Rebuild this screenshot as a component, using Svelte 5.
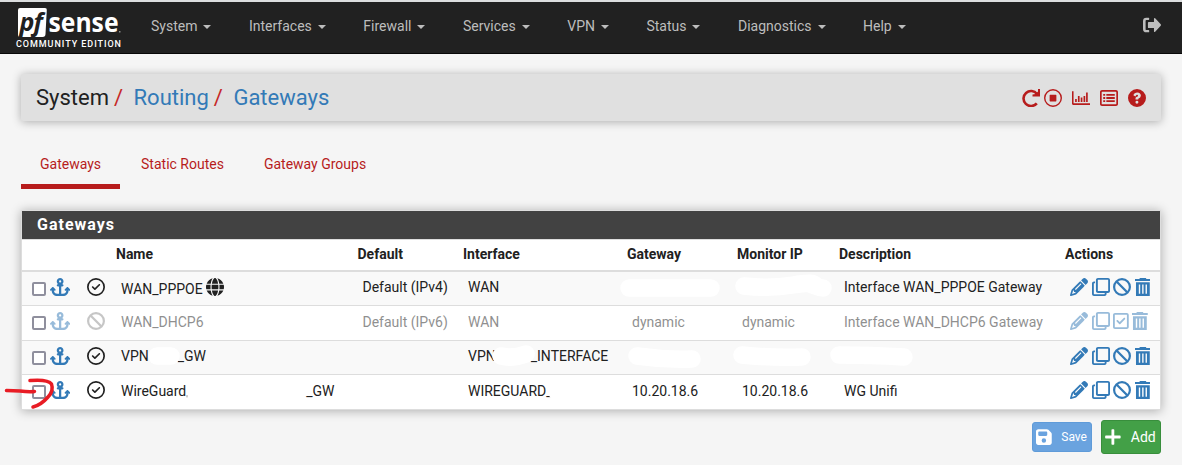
<script>
    const menus = ['System', 'Interfaces', 'Firewall', 'Services', 'VPN', 'Status', 'Diagnostics', 'Help'];
    const tabs = ['Gateways', 'Static Routes', 'Gateway Groups'];
    const rows = [
        { name: 'WAN_PPPOE', def: 'Default (IPv4)', iface: 'WAN', gw: '', mon: '', desc: 'Interface WAN_PPPOE Gateway', globe: true },
        { name: 'WAN_DHCP6', def: 'Default (IPv6)', iface: 'WAN', gw: 'dynamic', mon: 'dynamic', desc: 'Interface WAN_DHCP6 Gateway', disabled: true },
        { name: 'VPN', nameEnd: '_GW', gap: 29, def: '', iface: 'VPN', ifaceEnd: '_INTERFACE', gw: '', mon: '', desc: '' },
        { name: 'WireGuard', nameEnd: '_GW', gap: 120, def: '', iface: 'WIREGUARD_', gw: '10.20.18.6', mon: '10.20.18.6', desc: 'WG Unifi' }
    ];

    const icons = {
        anchor: [576, 'M320 96a32 32 0 1 1 -64 0 32 32 0 1 1 64 0zm21.1 80C367 158.8 384 129.4 384 96c0-53-43-96-96-96s-96 43-96 96c0 33.4 17 62.8 42.9 80H224c-17.7 0-32 14.3-32 32s14.3 32 32 32h32V448H208c-53 0-96-43-96-96v-6.1l7 7c9.4 9.4 24.6 9.4 33.9 0s9.4-24.6 0-33.9L97 263c-9.4-9.4-24.6-9.4-33.9 0L7 319c-9.4 9.4-9.4 24.6 0 33.9s24.6 9.4 33.9 0l7-7V352c0 88.4 71.6 160 160 160h160c88.4 0 160-71.6 160-160v-6.1l7 7c9.4 9.4 24.6 9.4 33.9 0s9.4-24.6 0-33.9l-56-56c-9.4-9.4-24.6-9.4-33.9 0l-56 56c-9.4 9.4-9.4 24.6 0 33.9s24.6 9.4 33.9 0l7-7V352c0 53-43 96-96 96H320V240h32c17.7 0 32-14.3 32-32s-14.3-32-32-32H341.1z'],
        check: [512, 'M256 48a208 208 0 1 1 0 416 208 208 0 1 1 0-416zm0 464A256 256 0 1 0 256 0a256 256 0 1 0 0 512zM369 209c9.4-9.4 9.4-24.6 0-33.9s-24.6-9.4-33.9 0l-111 111-47-47c-9.4-9.4-24.6-9.4-33.9 0s-9.4 24.6 0 33.9l64 64c9.4 9.4 24.6 9.4 33.9 0L369 209z'],
        ban: [512, 'M367.2 412.5L99.5 144.8C77.1 176.1 64 214.5 64 256c0 106 86 192 192 192c41.5 0 79.9-13.1 111.2-35.5zm45.3-45.3C434.9 335.9 448 297.5 448 256c0-106-86-192-192-192c-41.5 0-79.9 13.1-111.2 35.5L412.5 367.2zM0 256a256 256 0 1 1 512 0A256 256 0 1 1 0 256z'],
        globe: [512, 'M352 256c0 22.2-1.2 43.6-3.3 64H163.3c-2.2-20.4-3.3-41.8-3.3-64s1.2-43.6 3.3-64H348.7c2.2 20.4 3.3 41.8 3.3 64zm28.8-64H503.9c5.3 20.5 8.1 41.9 8.1 64s-2.8 43.5-8.1 64H380.8c2.1-20.6 3.2-42 3.2-64s-1.1-43.4-3.2-64zm112.6-32H376.7c-10-63.9-29.8-117.4-55.3-151.6c78.3 20.7 142 77.5 171.9 151.6zm-149.1 0H167.7c6.1-36.4 15.5-68.6 27-94.7c10.5-23.6 22.2-40.7 33.5-51.5C239.4 3.2 248.7 0 256 0s16.6 3.2 27.8 13.8c11.3 10.8 23 27.9 33.5 51.5c11.6 26 20.9 58.2 27 94.7zm-209 0H18.6C48.6 85.9 112.2 29.1 190.6 8.4C165.1 42.6 145.3 96.1 135.3 160zM8.1 192H131.2c-2.1 20.6-3.2 42-3.2 64s1.1 43.4 3.2 64H8.1C2.8 299.5 0 278.1 0 256s2.8-43.5 8.1-64zM194.7 446.6c-11.6-26-20.9-58.2-27-94.6H344.3c-6.1 36.4-15.5 68.6-27 94.6c-10.5 23.6-22.2 40.7-33.5 51.5C272.6 508.8 263.3 512 256 512s-16.6-3.2-27.8-13.8c-11.3-10.8-23-27.9-33.5-51.5zM135.3 352c10 63.9 29.8 117.4 55.3 151.6C112.2 482.9 48.6 426.1 18.6 352H135.3zm358.1 0c-30 74.1-93.6 130.9-171.9 151.6c25.5-34.2 45.2-87.7 55.3-151.6H493.4z'],
        pencil: [512, 'M410.3 231l11.3-11.3-33.9-33.9-62.1-62.1L291.7 89.8l-11.3 11.3-22.6 22.6L58.6 322.9c-10.4 10.4-18 23.3-22.2 37.4L1 480.7c-2.5 8.4-.2 17.5 6.1 23.7s15.3 8.5 23.7 6.1l120.3-35.4c14.1-4.2 27-11.8 37.4-22.2L387.7 253.7 410.3 231zM160 399.4l-9.1 22.7c-4 3.1-8.5 5.4-13.3 6.9L59.4 452l23-78.1c1.4-4.9 3.8-9.4 6.9-13.3l22.7-9.1v32c0 8.8 7.2 16 16 16h32zM362.7 18.7L348.3 33.2 325.7 55.8 314.3 67.1l33.9 33.9 62.1 62.1 33.9 33.9 11.3-11.3 22.6-22.6 14.5-14.5c25-25 25-65.5 0-90.5L453.3 18.7c-25-25-65.5-25-90.5 0zm-47.4 168l-144 144c-6.2 6.2-16.4 6.2-22.6 0s-6.2-16.4 0-22.6l144-144c6.2-6.2 16.4-6.2 22.6 0s6.2 16.4 0 22.6z'],
        clone: [512, 'M64 460H352c6 0 10-4 10-10V425h52v30c0 31-26 57-57 57H57c-31 0-57-26-57-57V155c0-31 26-57 57-57h30v52H64c-7 0-12 5-12 12V448c0 7 5 12 12 12zM178 372H448c7 0 12-5 12-12V64c0-7-5-12-12-12H178c-7 0-12 5-12 12V360c0 7 5 12 12 12zM112 368V57c0-31 26-57 57-57H455c31 0 57 26 57 57V368c0 31-26 57-57 57H169c-31 0-57-26-57-57z'],
        square: [448, 'M64 76c-7 0-12 5-12 12V424c0 7 5 12 12 12H384c7 0 12-5 12-12V88c0-7-5-12-12-12H64zM0 82C0 51 26 25 57 25H391c31 0 57 26 57 57V430c0 31-26 57-57 57H57c-31 0-57-26-57-57V82zM341 209L209 341c-10 10-26 10-36 0l-68-68c-10-10-10-26 0-36s26-10 36 0l50 50L305 173c10-10 26-10 36 0s10 26 0 36z'],
        trash: [448, 'M140 0H308L326 28H448V84H0V28H122zM28 120H420V512H28zM108 184V448H148V184zM204 184V448H244V184zM300 184V448H340V184z'],
        stop: [512, 'M256 40a216 216 0 1 1 0 432 216 216 0 1 1 0-432zm0 472A256 256 0 1 0 256 0a256 256 0 1 0 0 512zM176 160h160q16 0 16 16v160q0 16-16 16H176q-16 0-16-16V176q0-16 16-16z'],
        chart: [512, 'M0 64h44v340h468v48H32Q0 452 0 420zM88 282h48v86H88zM168 200h48v168h-48zM248 240h48v128h-48zM328 200h48v168h-48zM400 96h48v272h-48z'],
        list: [512, 'M64 80c-8.8 0-16 7.2-16 16V416c0 8.8 7.2 16 16 16H448c8.8 0 16-7.2 16-16V96c0-8.8-7.2-16-16-16H64zM0 82C0 51 26 25 57 25H455c31 0 57 26 57 57V430c0 31-26 57-57 57H57c-31 0-57-26-57-57V82zM92 140h56v52H92zM92 230h56v52H92zM92 320h56v52H92zM180 140h240v52H180zM180 230h240v52H180zM180 320h240v52H180z'],
        help: [512, 'M256 512A256 256 0 1 0 256 0a256 256 0 1 0 0 512zM152 178Q182 96 264 96Q366 102 366 190Q362 248 292 278V302H214V270Q214 242 240 230Q288 212 286 190Q282 166 256 166Q226 168 212 210zM212 374a42 42 0 1 1 84 0 42 42 0 1 1 -84 0z'],
        save: [448, 'M64 32C28.7 32 0 60.7 0 96V416c0 35.3 28.7 64 64 64H384c35.3 0 64-28.7 64-64V173.3c0-17-6.7-33.3-18.7-45.3L352 50.7C340 38.7 323.7 32 306.7 32H64zm0 96c0-17.7 14.3-32 32-32H288c17.7 0 32 14.3 32 32v64c0 17.7-14.3 32-32 32H96c-17.7 0-32-14.3-32-32V128zM224 288a64 64 0 1 1 0 128 64 64 0 1 1 0-128z'],
        plus: [448, 'M264 56q0-20-20-20h-40q-20 0-20 20V216H24q-20 0-20 20v40q0 20 20 20H184V456q0 20 20 20h40q20 0 20-20V296H424q20 0 20-20v-40q0-20-20-20H264z'],
        logout: [512, 'M318 66q10-16 28-2L504 238q14 18 0 36L346 448q-20 14-34-10V344H164q-24 0-24-24V192q0-24 24-24H312V80zM160 112H98q-24 0-24 24V376q0 24 24 24h62q16 0 16 18v28q0 18-16 18H96Q0 464 0 368V144Q0 48 96 48h64q16 0 16 18v28q0 18-16 18z']
    };
</script>

{#snippet icon(name)}
    <svg class="icon {name}" viewBox="0 0 {icons[name][0]} 512" width={icons[name][0] * 18 / 512} height="18">
        <path fill-rule="evenodd" d={icons[name][1]} />
    </svg>
{/snippet}

<nav class="navbar">
    <div class="brand">
        <svg width="106" height="30" viewBox="0 0 106 30">
            <path fill="#fff" d="M4 1h25q2 0 1.8 2L29.500 27q0 3-3 3H4q-2 0-2-2V3q0-2 2-2z" />
            <text class="pf" x="3.5" y="24">pf</text>
            <text class="sense" x="32.5" y="25" textLength="70" lengthAdjust="spacingAndGlyphs">sense</text>
            <rect x="103" y="24" width="1.5" height="1.5" fill="#888" />
        </svg>
        <span>COMMUNITY EDITION</span>
    </div>
    <ul class="menu">
        {#each menus as m}
            <li>{m}<i class="caret"></i></li>
        {/each}
    </ul>
    {@render icon('logout')}
</nav>

<header class="heading">
    <h1>System<b>/</b><a href="#routing">Routing</a><b>/</b><a href="#gateways">Gateways</a></h1>
    <div class="shortcuts">
        <svg class="icon" width="19" height="18" viewBox="0 0 19 18">
            <path fill="none" stroke="#b71c1c" stroke-width="2.6" d="M15 5A7.5 7.5 0 1 0 14.8 14.3" />
            <path d="M18 0V7.5h-7.5V5.5L13.5 5 16 2.5V0z" />
        </svg>
        {@render icon('stop')}
        {@render icon('chart')}
        {@render icon('list')}
        {@render icon('help')}
    </div>
</header>

<ul class="tabs">
    {#each tabs as t, i}
        <li class:active={i === 0}>{t}</li>
    {/each}
</ul>

<section class="panel">
    <h2>Gateways</h2>
    <div class="row head">
        <span></span><span></span><span>Name</span><span>Default</span><span>Interface</span><span>Gateway</span><span>Monitor IP</span><span>Description</span><span>Actions</span>
    </div>
    {#each rows as r, i}
        <div class="row r{i + 1}" class:disabled={r.disabled}>
            <span class="pick"><i class="box"></i>{@render icon('anchor')}</span>
            <span class="state">{@render icon(r.disabled ? 'ban' : 'check')}</span>
            <span class="name">{r.name}{#if r.nameEnd}<i class="gap" style:width="{r.gap}px"></i>{r.nameEnd}{/if}{#if r.globe}{@render icon('globe')}{/if}</span>
            <span>{r.def}</span>
            <span>{r.iface}{#if r.ifaceEnd}<i class="gap wide"></i>{r.ifaceEnd}{/if}</span>
            <span>{r.gw}</span>
            <span>{r.mon}</span>
            <span>{r.desc}</span>
            <span class="actions">
                {@render icon('pencil')}
                {@render icon('clone')}
                {@render icon(r.disabled ? 'square' : 'ban')}
                {@render icon('trash')}
            </span>
        </div>
    {/each}
</section>

<footer class="buttons">
    <button class="btn-save">{@render icon('save')}Save</button>
    <button class="btn-add">{@render icon('plus')}Add</button>
</footer>

<!-- hand-drawn marks laid over the table -->
<svg class="marks" width="1182" height="465">
    <g class="wipes">
        <path d="M629 288H711" />
        <path d="M744 286Q770 289 793 285T815 286Q820 288 823 288" />
        <path d="M157 356H171" />
        <path d="M501 356Q512 359 526 354" />
        <path d="M637 356Q665 360 692 359" />
        <path d="M742 355Q770 358 802 357" />
        <path d="M839 355Q870 355 904 357" />
        <path d="M557.5 393H580" />
    </g>
    <g class="pen">
        <path d="M6.5 390.5L20 391Q28 392 34.5 391.5" />
        <path d="M30 380.5Q48 379 51.5 384Q54 391 48 397Q41 405 33 407" />
    </g>
    <path class="dot" d="M187 395.5v1.5" />
</svg>

<style>
    :global(body) {
        background: #f5f5f5;
        font-family: Roboto, sans-serif;
        font-size: 14px;
        color: #212121;
        margin: 0;
    }
    ul {
        list-style: none;
        margin: 0;
        padding: 0;
        display: flex;
    }
    .icon {
        fill: currentColor;
        flex: none;
        display: block;
    }
    .navbar {
        height: 54px;
        background: #212121;
        border-top: 2px solid #dcdedf;
        border-bottom: 1px solid #080808;
        display: flex;
        box-sizing: border-box;
    }
    .brand {
        width: 120px;
        padding: 5px 0 0 16px;
        color: #fff;
        font-size: 9px;
        font-weight: 500;
        letter-spacing: .95px;
        line-height: 12px;
        white-space: nowrap;
    }
    .brand svg {
        display: block;
        margin-bottom: 1px;
        overflow: visible;
    }
    .pf {
        font: italic 700 25px "Open Sans", sans-serif;
        fill: #212121;
        letter-spacing: -1px;
    }
    .sense {
        font: 700 27px "Open Sans", sans-serif;
        fill: #fff;
        letter-spacing: 0;
    }
    .menu {
        flex: 1;
        color: #bdbdbd;
        line-height: 49px;
        height: 49px;
    }
    .menu li {
        padding: 0 18.75px;
        display: flex;
        align-items: center;
    }
    .menu li:first-child {
        padding-left: 15px;
    }
    .caret {
        border: 4px solid transparent;
        border-top-color: #bdbdbd;
        border-bottom: 0;
        margin: 1px 0 0 6px;
    }
    .navbar .logout {
        color: #bdbdbd;
        margin: 14px 21px 0 0;
    }
    .heading {
        margin: 20px 21px 0;
        height: 47px;
        background: #e0e0e0;
        border-radius: 2px;
        box-shadow: 0 1px 10px rgba(0, 0, 0, .3);
        display: flex;
        justify-content: space-between;
        align-items: center;
        padding: 0 15px;
    }
    h1 {
        font-size: 22px;
        font-weight: 400;
        margin: 0;
    }
    h1 b {
        font-weight: 400;
        color: #c62828;
        margin: 0 10.5px 0 5px;
    }
    a {
        color: #337ab7;
        text-decoration: none;
    }
    .shortcuts {
        display: flex;
        color: #b71c1c;
        gap: 10px;
    }
    .shortcuts .icon:first-child {
        margin-right: -7px;
    }
    .tabs {
        margin: 21px;
        height: 47px;
        color: #b71c1c;
        gap: 2px;
    }
    .tabs li {
        padding: 13px 19px 0;
        line-height: 18px;
        height: 29px;
    }
    .tabs .active {
        border-bottom: 5px solid #b71c1c;
    }
    .panel {
        margin: 0 21px;
        border: 1px solid #ddd;
        background: #fff;
        box-shadow: 0 1px 10px rgba(0, 0, 0, .3);
    }
    h2 {
        margin: 0;
        height: 28px;
        line-height: 28px;
        padding-left: 15px;
        background: #424242;
        color: #fff;
        font-size: 16px;
        font-weight: 700;
        letter-spacing: 1px;
        border-bottom: 1px solid #ddd;
    }
    .row {
        display: grid;
        grid-template-columns: 60px 29px 241.5px 105.5px 164px 110px 102px 226px 1fr;
        height: 34px;
        line-height: 31px;
        border-top: 1px solid #ddd;
        box-sizing: border-box;
    }
    .row > span {
        padding-left: 10px;
        white-space: nowrap;
    }
    .row.head {
        height: 30px;
        line-height: 29px;
        border: 0;
        font-weight: 700;
    }
    .row.head > span {
        padding-left: 5px;
    }
    .r1, .r3 {
        background: #f9f9f9;
    }
    .row.r1 {
        border-top-width: 2px;
        height: 35px;
    }
    .row.r2, .row.r4 {
        height: 35px;
        line-height: 33px;
    }
    .disabled > span {
        opacity: .5;
    }
    .row.disabled > .pick {
        opacity: 1;
    }
    .disabled .pick .icon {
        opacity: .5;
    }
    .row .pick, .row .actions {
        display: flex;
        padding-top: 6px;
        color: #337ab7;
    }
    .row .state {
        padding: 6px 0 0 5px;
    }
    .row.disabled > .state {
        opacity: .25;
    }
    .box {
        width: 10px;
        height: 10px;
        border: 2px solid #8f8f9d;
        border-radius: 2px;
        background: #fff;
        margin: 4px 4px 0 0;
    }
    .row .actions {
        padding-left: 10px;
        gap: 3.5px;
    }
    .row .name {
        display: flex;
    }
    .r1 .name {
        line-height: 34px;
    }
    .name .globe {
        margin: 6px 0 0 3px;
    }
    .gap {
        display: inline-block;
    }
    .wide {
        width: 35px;
    }
    .buttons {
        display: flex;
        justify-content: flex-end;
        align-items: center;
        gap: 9px;
        padding: 10px 21px 0;
    }
    button {
        font: 14px Roboto, sans-serif;
        color: #fff;
        display: flex;
        align-items: center;
        border-radius: 3px;
        box-sizing: border-box;
        width: 60px;
        padding: 0 3px;
        white-space: nowrap;
    }
    .btn-save {
        font-size: 12px;
        height: 30px;
        background: #6aa3df;
        border: 1px solid #5f9bd9;
        gap: 9.5px;
    }
    .btn-add {
        height: 34px;
        background: #43a047;
        border: 1px solid #388e3c;
        gap: 10px;
    }
    .marks {
        position: absolute;
        left: 0;
        top: 0;
        pointer-events: none;
    }
    .marks path {
        fill: none;
        stroke-linecap: round;
    }
    .wipes {
        stroke: #fff;
        stroke-width: 17.5px;
    }
    .pen {
        stroke: #e81c24;
        stroke-width: 3.5px;
    }
    .dot {
        stroke: #999;
        stroke-width: 1px;
    }
</style>
